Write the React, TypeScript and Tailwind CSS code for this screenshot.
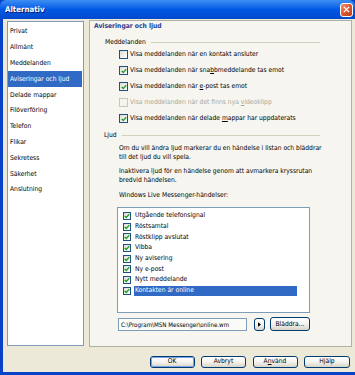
import type { ReactNode } from 'react';

const navItems = [
  'Privat',
  'Allmänt',
  'Meddelanden',
  'Aviseringar och ljud',
  'Delade mappar',
  'Filöverföring',
  'Telefon',
  'Flikar',
  'Sekretess',
  'Säkerhet',
  'Anslutning',
];

const events = [
  'Utgående telefonsignal',
  'Röstsamtal',
  'Röstklipp avslutat',
  'Vibba',
  'Ny avisering',
  'Ny e-post',
  'Nytt meddelande',
  'Kontakten är online',
];

function CheckBox({ checked = false, disabled = false, small = false }: { checked?: boolean; disabled?: boolean; small?: boolean }) {
  return (
    <span
      className={`${small ? 'w-[8px] h-[8px]' : 'w-[9px] h-[9px]'} shrink-0 flex items-center justify-center border ${
        disabled ? 'border-[#cac8bb] bg-[#f4f3ee]' : 'border-[#1c5180] bg-gradient-to-br from-[#dcdcd5] to-white'
      }`}
    >
      {checked && (
        <svg viewBox="0 0 7 7" className="w-[6px] h-[6px]">
          <path d="M0.8 3.4 L2.7 5.3 L6.2 1.3" stroke="#21a121" strokeWidth="1.6" fill="none" />
        </svg>
      )}
    </span>
  );
}

function Option({ checked, disabled, children }: { checked?: boolean; disabled?: boolean; children: ReactNode }) {
  return (
    <div className="h-[16px] flex items-center gap-[2px] pl-[29px]">
      <CheckBox checked={checked} disabled={disabled} />
      <span className={disabled ? 'text-[#aca899]' : 'text-black'}>{children}</span>
    </div>
  );
}

function GroupLabel({ children, indent }: { children: ReactNode; indent: string }) {
  return (
    <div className={`h-[9px] flex items-center ${indent} pr-[31px]`}>
      <span className="pr-[5px]">{children}</span>
      <span className="flex-1 border-t border-[#d0d0bf]" />
    </div>
  );
}

function XpButton({ children, primary = false, className = '' }: { children: ReactNode; primary?: boolean; className?: string }) {
  return (
    <div
      className={`flex items-center justify-center rounded-[3px] border border-[#003c74] bg-gradient-to-b from-white via-[#f4f3ee] to-[#d8d4c8] text-black ${className}`}
    >
      <div
        className={`w-full h-full flex items-center justify-center rounded-[2px] ${
          primary ? 'border border-[#7ba2e7]' : ''
        }`}
      >
        {children}
      </div>
    </div>
  );
}

export default function App() {
  return (
    <div className="w-[355px] h-[375px] flex flex-col overflow-hidden bg-[#0842c8] font-['DejaVu_Sans_Condensed','DejaVu_Sans',sans-serif] text-[6.7px] leading-[9px] text-black">
      {/* title bar */}
      <div className="h-[19px] shrink-0 flex items-center justify-between pl-[5px] pr-[2px] rounded-t-[6px] bg-gradient-to-b from-[#3c8ef3] via-[#0058e6] to-[#0349cc]">
        <span className="text-white font-bold text-[7.8px] [text-shadow:1px_1px_0_#0a1e6e]">Alternativ</span>
        <div className="w-[13px] h-[14px] rounded-[3px] border border-white flex items-center justify-center bg-gradient-to-br from-[#ee8f6c] via-[#e0582f] to-[#c23a14]">
          <svg viewBox="0 0 8 8" className="w-[7px] h-[7px]">
            <path d="M1 1 L7 7 M7 1 L1 7" stroke="white" strokeWidth="1.6" />
          </svg>
        </div>
      </div>

      {/* body */}
      <div className="flex-1 flex flex-col bg-[#ece9d8] ml-[3px] mb-[3px] pl-[4px] pr-[3px] pt-[1px]">
        <div className="flex gap-[5px] h-[327px]">
          {/* nav list */}
          <div className="w-[77px] mt-[1px] h-[325px] bg-white border border-[#7f9db9] pt-[2px] pr-[1px]">
            {navItems.map((item) => (
              <div
                key={item}
                className={`h-[15.8px] flex items-center pl-[2px] ${
                  item === 'Aviseringar och ljud' ? 'bg-[#316ac5] text-white' : ''
                }`}
              >
                {item}
              </div>
            ))}
          </div>

          {/* content panel */}
          <div className="flex-1 h-[327px] border border-[#aeb1a6] bg-[#f6f5ef] flex flex-col">
            <div className="h-[9px] pl-[4px] font-bold text-[#1e3d92] flex items-center mt-[0.5px]">Aviseringar och ljud</div>

            <div className="mt-[7px]">
              <GroupLabel indent="pl-[15px]">Meddelanden</GroupLabel>
            </div>
            <Option>Visa meddelanden när en kontakt ansluter</Option>
            <Option checked>
              Visa meddelanden när sna<u>b</u>bmeddelande tas emot
            </Option>
            <Option checked>
              Visa meddelanden när <u>e</u>-post tas emot
            </Option>
            <Option disabled>
              Visa meddelanden när det finns nya <u>v</u>ideoklipp
            </Option>
            <Option checked>
              Visa meddelanden när delade <u>m</u>appar har uppdaterats
            </Option>

            <div className="mt-[4.5px]">
              <GroupLabel indent="pl-[14px]">Ljud</GroupLabel>
            </div>

            <div className="pl-[29px] mt-[4px] whitespace-nowrap">
              <p>Om du vill ändra ljud markerar du en händelse i listan och bläddrar</p>
              <p>till det ljud du vill spela.</p>
            </div>
            <div className="pl-[29px] mt-[5px]">
              <p>Inaktivera ljud för en händelse genom att avmarkera kryssrutan</p>
              <p>bredvid händelsen.</p>
            </div>
            <div className="pl-[29px] mt-[6px] h-[9px]">Windows Live Messenger-händelser:</div>

            {/* event list */}
            <div className="ml-[27px] mt-[6.5px] w-[193px] h-[106px] bg-white border border-[#7f9db9] pt-[3px] pl-[5px]">
              {events.map((ev) => (
                <div key={ev} className="h-[10.7px] flex items-center gap-[3px]">
                  <CheckBox checked small />
                  <span
                    className={`h-[10px] flex items-center pl-[1px] ${
                      ev === 'Kontakten är online' ? 'w-[163px] bg-[#316ac5] text-white' : ''
                    }`}
                  >
                    {ev}
                  </span>
                </div>
              ))}
            </div>

            {/* path row */}
            <div className="flex items-center ml-[28px] mt-[5px] h-[13px]">
              <div className="w-[129px] h-[13px] border border-[#7f9db9] bg-[#fafaf7] flex items-center pl-[2px] text-[6.2px] whitespace-nowrap overflow-hidden">
                C:\Program\MSN Messenger\online.wm
              </div>
              <XpButton className="w-[11px] h-[13px] ml-[7px]">
                <svg viewBox="0 0 4 6" className="w-[3px] h-[5px]">
                  <path d="M0 0 L4 3 L0 6 Z" fill="black" />
                </svg>
              </XpButton>
              <XpButton className="w-[40px] h-[14px] ml-[5px]">Bläddra...</XpButton>
            </div>
          </div>
        </div>

        {/* dialog buttons */}
        <div className="flex justify-end gap-[6.5px] mt-[9px] pr-[2px]">
          <XpButton primary className="w-[45px] h-[11.5px]">OK</XpButton>
          <XpButton className="w-[45px] h-[11.5px]">Avbryt</XpButton>
          <XpButton className="w-[45px] h-[11.5px]">
            <span>
              A<u>n</u>vänd
            </span>
          </XpButton>
          <XpButton className="w-[46px] h-[11.5px]">Hjälp</XpButton>
        </div>
      </div>
    </div>
  );
}
